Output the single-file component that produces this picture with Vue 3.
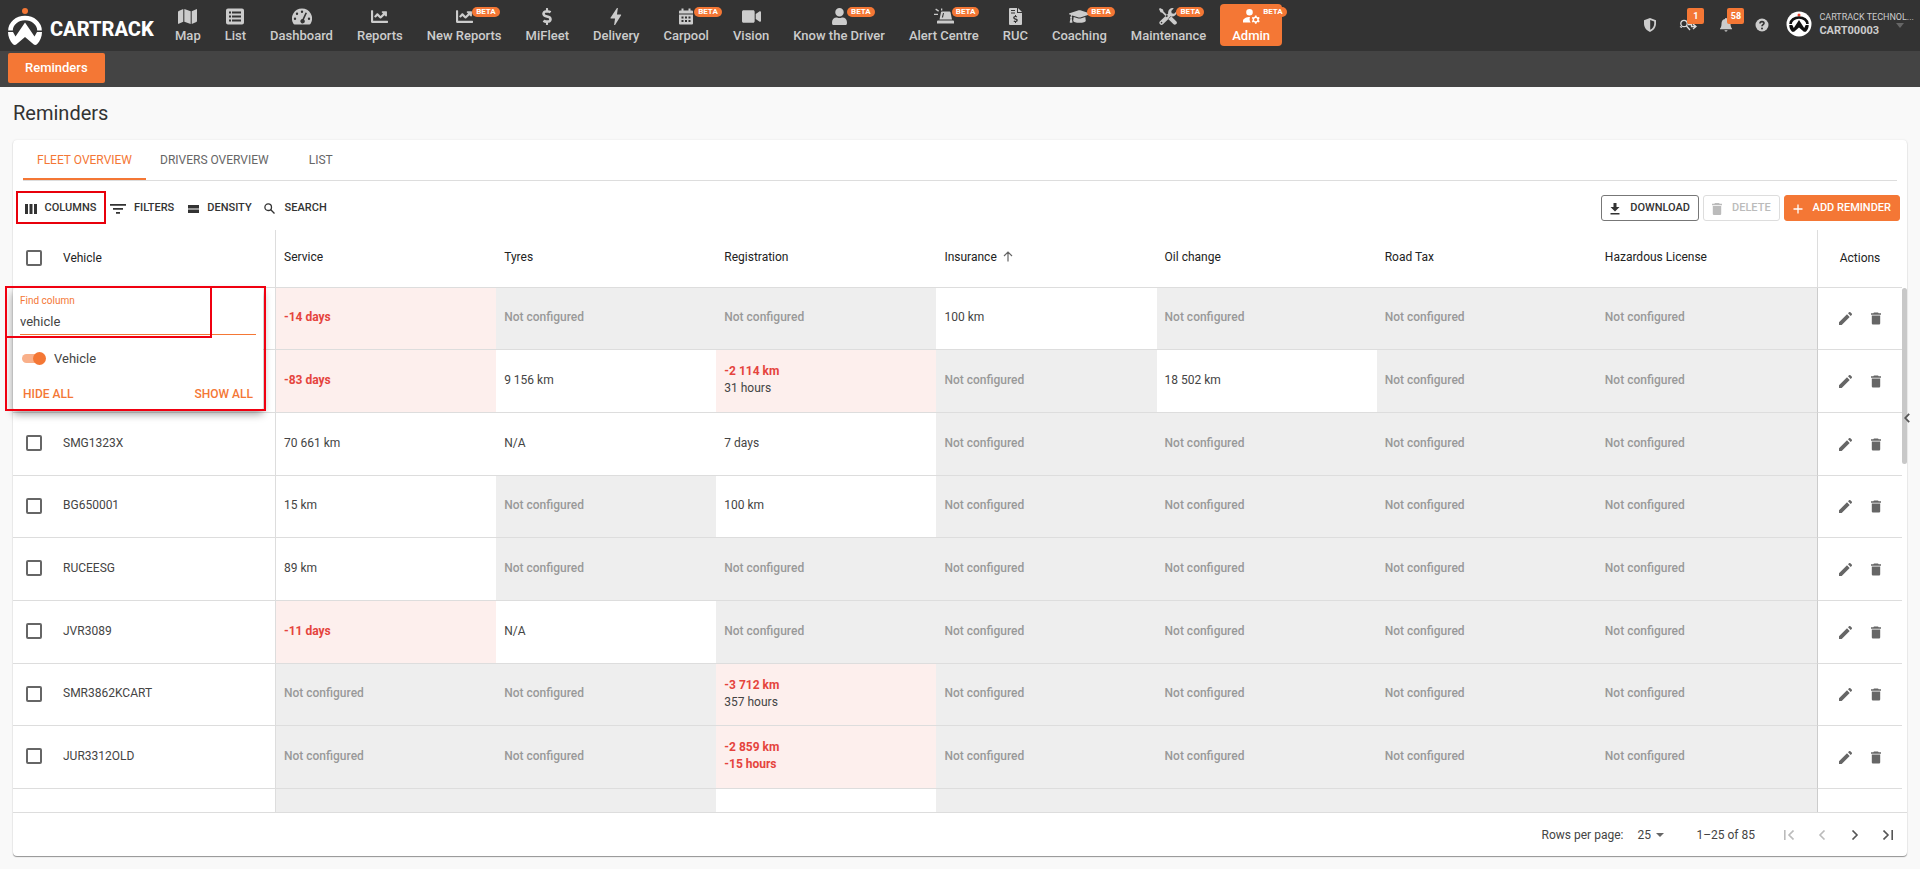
<script setup>
import { ref } from 'vue'

const icons = {
  map: { box: '0 0 576 512', w: 19, d: 'M0 117.66v346.32c0 11.32 11.43 19.06 21.94 14.86L160 416V32L20.12 87.95A32 32 0 0 0 0 117.66zM192 416l192 64V96L192 32v384zM554.06 33.16L416 96v384l139.88-55.95A32 32 0 0 0 576 394.34V48.02c0-11.32-11.43-19.06-21.94-14.86z' },
  list: { box: '0 0 18 16', w: 18, d: 'M2 0h14a2 2 0 0 1 2 2v12a2 2 0 0 1-2 2H2a2 2 0 0 1-2-2V2a2 2 0 0 1 2-2zM3 3v2h2V3zM6 3v2h9V3zM3 7v2h2V7zM6 7v2h9V7zM3 11v2h2v-2zM6 11v2h9v-2z' },
  gauge: { box: '0 0 20 16', w: 20, d: 'M10 0a10 10 0 0 1 8.700 15c-.3.600-.8 1-1.500 1H2.800c-.7 0-1.200-.4-1.500-1A10 10 0 0 1 10 0zM10 2a1.200 1.200 0 1 0 0 2.400A1.200 1.200 0 0 0 10 2zM5 4a1.200 1.200 0 1 0 0 2.400A1.200 1.200 0 0 0 5 4zM3 9a1.200 1.200 0 1 0 0 2.400A1.200 1.200 0 0 0 3 9zM17 9a1.200 1.200 0 1 0 0 2.400A1.200 1.200 0 0 0 17 9zM13.500 4l-3 6.600a2.200 2.200 0 1 0 1.500.5l3-6.600z' },
  chart: { box: '0 0 512 512', w: 17, d: 'M496 384H64V80c0-8.840-7.160-16-16-16H16C7.160 64 0 71.160 0 80v336c0 17.670 14.330 32 32 32h464c8.840 0 16-7.160 16-16v-32c0-8.840-7.160-16-16-16zM464 96H345.940c-21.380 0-32.090 25.850-16.970 40.970l32.400 32.400L288 242.750l-73.370-73.370c-12.500-12.500-32.760-12.500-45.250 0l-68.690 68.690c-6.250 6.250-6.250 16.380 0 22.630l22.620 22.620c6.250 6.250 16.380 6.250 22.630 0L192 237.250l73.370 73.370c12.500 12.500 32.760 12.500 45.250 0l96-96 32.400 32.400c15.120 15.120 40.970 4.410 40.970-16.970V112c0-8.840-7.160-16-16-16z' },
  dollar: { box: '0 0 288 512', w: 10, d: 'M209.2 233.4l-108-31.6C88.7 198.2 80 186.5 80 173.5c0-16.3 13.2-29.5 29.5-29.5h66.3c12.2 0 24.2 3.7 34.2 10.5 6.1 4.1 14.3 3.1 19.5-2l34.8-34c7.1-6.9 6.1-18.4-1.8-24.5C238 74.8 207.4 64.1 176 64V16c0-8.8-7.2-16-16-16h-32c-8.800 0-16 7.200-16 16v48h-2.500C45.800 64-5.400 118.700.5 183.600c4.200 46.100 39.400 83.600 83.800 96.600l102.500 30c12.500 3.700 21.200 15.300 21.200 28.300 0 16.300-13.200 29.500-29.500 29.500h-66.300C100 368 88 364.300 78 357.500c-6.100-4.100-14.300-3.100-19.500 2l-34.800 34c-7.100 6.900-6.100 18.400 1.800 24.500 24.500 19.200 55.100 29.900 86.500 30v48c0 8.800 7.200 16 16 16h32c8.800 0 16-7.200 16-16v-48.200c46.600-.9 90.300-28.600 105.700-72.700 21.500-61.600-14.600-124.800-72.500-141.700z' },
  bolt: { box: '6 3 12 18', w: 12, d: 'M11 21h-1l1-7H6.500c-.5 0-.5-.3-.3-.7L13 3h1l-1 7h4c.5 0 .6.300.4.600L11 21z' },
  calendar: { box: '0 0 14 16', w: 14, d: 'M2.500 0h2v2h5V0h2v2H13a1 1 0 0 1 1 1v2H0V3a1 1 0 0 1 1-1h1.500zM0 6h14v9a1 1 0 0 1-1 1H1a1 1 0 0 1-1-1zM2.500 8v2h2V8zM6 8v2h2V8zM9.500 8v2h2V8zM2.500 11.500v2h2v-2zM6 11.500v2h2v-2zM9.500 11.500v2h2v-2z' },
  video: { box: '0 0 576 512', w: 19, d: 'M336.200 64H47.800C21.400 64 0 85.400 0 111.800v288.400C0 426.600 21.400 448 47.800 448h288.400c26.400 0 47.800-21.400 47.800-47.800V111.800c0-26.400-21.400-47.800-47.800-47.800zm189.400 37.700L416 177.300v157.400l109.600 75.500c21.200 14.600 50.400-.3 50.400-25.800V127.500c0-25.400-29.100-40.400-50.400-25.800z' },
  user: { box: '0 0 448 512', w: 15, d: 'M224 256c70.700 0 128-57.300 128-128S294.700 0 224 0 96 57.300 96 128s57.300 128 128 128zm89.600 32h-16.700c-22.200 10.200-46.900 16-72.900 16s-50.600-5.800-72.900-16h-16.700C60.200 288 0 348.200 0 422.400V464c0 26.500 21.500 48 48 48h352c26.500 0 48-21.500 48-48v-41.600c0-74.200-60.200-134.400-134.400-134.400z' },
  alert: { box: '0 0 20 16', w: 20, d: 'M8 3h7.500a1 1 0 0 1 1 .8L18 11H5.500L7 3.800A1 1 0 0 1 8 3zM9 4.500L7.800 9H9l1-4.500zM4 12h15a1 1 0 0 1 1 1v2H3v-2a1 1 0 0 1 1-1zM2 0l3 2-.7 1.200-3-2zM0 5.200h4v1.400H0zM7 0h1.300v2H7z' },
  file: { box: '0 0 13 17', w: 13, d: 'M1 0h7v5h5v11a1 1 0 0 1-1 1H1a1 1 0 0 1-1-1V1a1 1 0 0 1 1-1zM9 0l4 4H9zM2 2v1h4V2zM2 4.500v1h4v-1zM6 7v1c-2 .2-2.500 2.500-.8 3.200l1.700.7c.7.4.4 1.100-.3 1.100-.6 0-1-.2-1.500-.5l-.6 1c.5.4 1 .5 1.500.6V15h1v-.9c2-.3 2.400-2.700.6-3.300L6 10.200c-.8-.3-.5-1.200.3-1.200.5 0 .9.100 1.300.4l.6-1c-.4-.3-.8-.4-1.200-.5V7z' },
  cap: { box: '0 0 640 512', w: 21, d: 'M622.340 153.200L343.400 67.500c-15.200-4.670-31.600-4.670-46.790 0L17.660 153.200c-23.540 7.230-23.540 38.360 0 45.590l48.630 14.940c-10.670 13.190-17.230 29.280-17.880 46.900C38.780 266.150 32 276.110 32 288c0 10.780 5.680 19.850 13.860 25.650L20.330 428.530C18.110 438.520 25.710 448 35.940 448h56.110c10.240 0 17.840-9.480 15.620-19.470L82.140 313.650C90.320 307.850 96 298.780 96 288c0-11.570-6.470-21.250-15.660-26.870.76-15.020 8.440-28.300 20.690-36.720L296.600 284.500c9.060 2.780 26.440 6.250 46.790 0l278.950-85.700c23.550-7.240 23.550-38.360 0-45.600zM352.790 315.090c-28.530 8.760-52.840 3.920-65.590 0l-145.020-44.550L128 384c0 35.350 85.960 64 192 64s192-28.650 192-64l-14.180-113.470-145.030 44.560z' },
  tools: { box: '0 0 18 17', w: 18, d: 'M1 0L4 1.500 4.500 3.500 9 8l-1.300 1.300L3.200 4.800 1.500 4.300 0 1zM10.500 9.200l1.400-1.200 5.300 5.200a2 2 0 0 1-2.900 2.900L9.200 11zM17.600 3.200A4.500 4.500 0 0 1 12 8.400l-8 7.800a2 2 0 0 1-3-2.900l8.200-7.700A4.600 4.600 0 0 1 14.800.2l-2.500 2.700.4 2.400 2.400.4zM2.500 13.800a.8.8 0 1 0 .1 1.600.8.8 0 0 0-.1-1.600z' },
  admin: { box: '0 0 17 15', w: 17, d: 'M6.500 0a3.300 3.300 0 1 1 0 6.600 3.300 3.300 0 0 1 0-6.600zM7 8c-.7 2-.5 4 .7 5.500H0V12c0-2.500 3.500-4 7-4zM12 6.500h1.500l.3 1.300.9.500 1.300-.4.700 1.300-.9.900v1.100l.9.900-.7 1.300-1.300-.4-.9.500-.3 1.300H12l-.3-1.300-.9-.5-1.300.4-.7-1.300.9-.9v-1.100l-.9-.9.700-1.300 1.300.4.900-.5zM12.700 9a1.600 1.600 0 1 0 0 3.300 1.600 1.600 0 0 0 0-3.300z' },
}

const nav = [
  { label: 'Map', icon: 'map' },
  { label: 'List', icon: 'list' },
  { label: 'Dashboard', icon: 'gauge' },
  { label: 'Reports', icon: 'chart' },
  { label: 'New Reports', icon: 'chart', beta: true },
  { label: 'MiFleet', icon: 'dollar' },
  { label: 'Delivery', icon: 'bolt' },
  { label: 'Carpool', icon: 'calendar', beta: true },
  { label: 'Vision', icon: 'video' },
  { label: 'Know the Driver', icon: 'user', beta: true },
  { label: 'Alert Centre', icon: 'alert', beta: true },
  { label: 'RUC', icon: 'file' },
  { label: 'Coaching', icon: 'cap', beta: true },
  { label: 'Maintenance', icon: 'tools', beta: true },
  { label: 'Admin', icon: 'admin', beta: true, active: true },
]

const columns = ['Service', 'Tyres', 'Registration', 'Insurance', 'Oil change', 'Road Tax', 'Hazardous License']

// '' is an unconfigured reminder, a leading minus marks an overdue one
const rows = [
  { name: '', cells: ['-14 days', '', '', '100 km', '', '', ''] },
  { name: '', cells: ['-83 days', '9 156 km', '-2 114 km|31 hours', '', '18 502 km', '', ''] },
  { name: 'SMG1323X', cells: ['70 661 km', 'N/A', '7 days', '', '', '', ''] },
  { name: 'BG650001', cells: ['15 km', '', '100 km', '', '', '', ''] },
  { name: 'RUCEESG', cells: ['89 km', '', '', '', '', '', ''] },
  { name: 'JVR3089', cells: ['-11 days', 'N/A', '', '', '', '', ''] },
  { name: 'SMR3862KCART', cells: ['', '', '-3 712 km|357 hours', '', '', '', ''] },
  { name: 'JUR3312OLD', cells: ['', '', '-2 859 km|-15 hours', '', '', '', ''] },
  { name: '', cells: [' ', ' ', '|', ' ', ' ', ' ', ' '] },
]

function cellClass(value) {
  if (value.startsWith('-')) return 'overdue'
  return value.trim() === '' ? 'empty' : ''
}
function lines(value) {
  return value === '' ? ['Not configured'] : value.split('|')
}

const search = ref('vehicle')
const showVehicle = ref(true)
</script>

<template>
  <div class="page">
    <header class="topbar">
      <a class="brand" href="#" aria-label="Cartrack home">
        <svg class="emblem" viewBox="0 0 36 40" aria-hidden="true">
          <circle cx="18" cy="5" r="3" fill="#f47735" />
          <path d="M3.500 24.500a14.500 12.500 0 0 1 29 0" fill="none" stroke="#fff" stroke-width="4.600" />
          <path d="M1 26h5l2.500 4.500L18 16.500l9.500 14L30 26h5c0 5-2 9-5 12.300-1 .8-2.500.8-3.500 0L18 31l-8.500 7.300c-1 .8-2.500.8-3.500 0C3 35 1 31 1 26z" fill="#fff" />
        </svg>
        <span>CARTRACK</span>
      </a>
      <nav class="menu">
        <a v-for="item in nav" :key="item.label" href="#" class="item" :class="{ active: item.active }">
          <span class="glyph">
            <svg :viewBox="icons[item.icon].box" :width="icons[item.icon].w" height="17" aria-hidden="true">
              <path :d="icons[item.icon].d" fill="currentColor" fill-rule="evenodd" />
            </svg>
            <span v-if="item.beta" class="beta">BETA</span>
          </span>
          <span>{{ item.label }}</span>
        </a>
      </nav>
      <div class="tools">
        <button type="button" aria-label="Privacy">
          <svg viewBox="0 0 14 14" width="14" height="14"><path fill="#ccc" fill-rule="evenodd" d="M7 0l6 2.200v3.300c0 4-2.500 7-6 8.500-3.500-1.500-6-4.500-6-8.500V2.200zM7.200 2v9.800c2.500-1.300 4-3.500 4-6.300V3.500z" /></svg>
        </button>
        <button type="button" aria-label="Lookups">
          <svg viewBox="0 0 18 14" width="18" height="14" fill="none" stroke="#ddd"><circle cx="5" cy="5.500" r="3.200" stroke-width="1.300" /><path d="M7.500 8l3.500 4M1 8.500l2 1M8 3h5M9 6.500h3.500v2h4M14 6l3 2.500-3 2.500" stroke-width="1.300" /></svg>
          <span class="count">1</span>
        </button>
        <button type="button" aria-label="Notifications">
          <svg viewBox="0 0 14 14" width="14" height="14"><path fill="#ccc" d="M7 0c.6 0 1 .4 1 1 2.400.5 3.500 2.300 3.500 4.500 0 2.500.5 4 1.500 5v.7H1v-.7c1-1 1.500-2.500 1.500-5C2.500 3.300 3.600 1.500 6 1c0-.6.4-1 1-1zM5.500 12.200h3C8.500 14 5.500 14 5.500 12.200z" /></svg>
          <span class="count">58</span>
        </button>
        <button type="button" aria-label="Help">
          <svg viewBox="0 0 14 14" width="14" height="14"><circle cx="7" cy="7" r="6.500" fill="#ccc" /><path d="M5 5.500C5 3 9 3 9 5.300 9 6.700 7 6.700 7 8.300" fill="none" stroke="#333" stroke-width="1.600" /><circle cx="7" cy="10.500" r="1" fill="#333" /></svg>
        </button>
      </div>
      <button class="account" type="button">
        <svg viewBox="0 0 26 26" width="26" height="26" aria-hidden="true">
          <circle cx="13" cy="13" r="12.500" fill="#fff" /><circle cx="13" cy="4" r="1.500" fill="#f4442e" />
          <path d="M4.500 13a8.500 6.500 0 0 1 17 0" fill="none" stroke="#111" stroke-width="2.600" />
          <path d="M3.300 14h3l1.500 3L13 9l5.200 8 1.500-3h3c0 3-1 5-2.800 6.700h-2L13 16.500l-4.900 4.200h-2C4.300 19 3.300 17 3.300 14z" fill="#111" />
        </svg>
        <span class="who"><span>CARTRACK TECHNOL...</span><strong>CART00003</strong></span>
        <svg class="down" viewBox="0 0 8 5" width="8" height="5" aria-hidden="true"><path d="M0 0h8L4 5z" fill="#666" /></svg>
      </button>
    </header>
    <div class="subbar"><a href="#" class="chip">Reminders</a></div>

    <main class="content">
      <h1>Reminders</h1>
      <section class="card">
        <div class="tabs" role="tablist">
          <button type="button" role="tab" aria-selected="true" class="on">FLEET OVERVIEW</button>
          <button type="button" role="tab" aria-selected="false">DRIVERS OVERVIEW</button>
          <button type="button" role="tab" aria-selected="false">LIST</button>
        </div>
        <div class="toolbar">
          <button type="button" class="marked">
            <svg viewBox="0 0 12 10" width="12" height="10"><path d="M0 0h3v10H0zM4.500 0h3v10h-3zM9 0h3v10H9z" fill="currentColor" /></svg>COLUMNS
          </button>
          <button type="button" class="filters">
            <svg viewBox="0 0 16 10" width="16" height="10"><path d="M0 0h16v1.700H0zM3 4h10v1.700H3zM6 8h4v1.700H6z" fill="currentColor" /></svg>FILTERS
          </button>
          <button type="button" class="density">
            <svg viewBox="0 0 11 8" width="11" height="8"><path d="M0 0h11v3.500H0zM0 4.500h11V8H0z" fill="currentColor" /></svg>DENSITY
          </button>
          <button type="button" class="find">
            <svg viewBox="0 0 11 11" width="11" height="11" fill="none" stroke="currentColor" stroke-width="1.300"><circle cx="4.200" cy="4.200" r="3.300" /><path d="M6.800 6.800l3.700 3.700" /></svg>SEARCH
          </button>
          <div class="actions">
            <button type="button" class="box">
              <svg viewBox="0 0 10 12" width="10" height="12"><path d="M3.500 0h3v4H9.500L5 8.500.500 4h3zM.500 10h9v1.500h-9z" fill="currentColor" /></svg>DOWNLOAD
            </button>
            <button type="button" class="box" disabled>
              <svg viewBox="0 0 10 12" width="10" height="12"><path d="M3 0h4l.7.700H10v1.500H0V.7h2.300zM.8 3h8.400v7.700A1.200 1.200 0 0 1 8 12H2a1.200 1.200 0 0 1-1.200-1.300z" fill="currentColor" /></svg>DELETE
            </button>
            <button type="button" class="box primary">
              <svg viewBox="0 0 10 10" width="10" height="10"><path d="M5 .5v9M.5 5h9" stroke="currentColor" stroke-width="1.300" /></svg>ADD REMINDER
            </button>
          </div>
        </div>

        <div class="grid">
          <div class="scroller">
            <table>
              <colgroup>
                <col class="c-check" /><col class="c-name" />
                <col v-for="c in columns" :key="c" />
                <col class="c-act" />
              </colgroup>
              <thead>
                <tr>
                  <th class="check"><input type="checkbox" aria-label="Select all" /></th>
                  <th class="name">Vehicle</th>
                  <th v-for="c in columns" :key="c">
                    {{ c }}
                    <svg v-if="c === 'Insurance'" viewBox="0 0 10 11" width="10" height="11" fill="none" stroke="#666" stroke-width="1.200"><path d="M5 10.500V1M1 5l4-4 4 4" /></svg>
                  </th>
                  <th class="act">Actions</th>
                </tr>
              </thead>
              <tbody>
                <tr v-for="(row, i) in rows" :key="i">
                  <td class="check"><input v-if="i < 8" type="checkbox" :aria-label="'Select row ' + (i + 1)" /></td>
                  <td class="name">{{ row.name }}</td>
                  <td v-for="(cell, j) in row.cells" :key="j" :class="cellClass(cell)">
                    <div v-for="(line, k) in lines(cell)" :key="k" :class="{ late: line.startsWith('-') }">{{ line }}</div>
                  </td>
                  <td class="act">
                    <div v-if="i < 8" class="pair">
                      <button type="button" aria-label="Edit">
                        <svg viewBox="0 0 13 13" width="13" height="13"><path d="M0 10.300L8 2.300 10.700 5l-8 8H0zM9 1.300L10 .3a1 1 0 0 1 1.400 0l1.300 1.300a1 1 0 0 1 0 1.400l-1 1z" fill="currentColor" /></svg>
                      </button>
                      <button type="button" aria-label="Delete">
                        <svg viewBox="0 0 10 12" width="10" height="13"><path d="M3 0h4l.7.700H10v1.500H0V.7h2.300zM.8 3h8.400v7.700A1.200 1.200 0 0 1 8 12H2a1.200 1.200 0 0 1-1.200-1.300z" fill="currentColor" /></svg>
                      </button>
                    </div>
                  </td>
                </tr>
              </tbody>
            </table>
          </div>
          <div class="thumb"></div>
          <button class="drawer" type="button" aria-label="Open panel">
            <svg viewBox="0 0 6 10" width="6" height="10" fill="none" stroke="#555" stroke-width="1.800"><path d="M5.200 .8L1.200 5l4 4.200" /></svg>
          </button>

          <div class="popup">
            <label class="field">
              <span>Find column</span>
              <input v-model="search" type="text" />
            </label>
            <label class="toggle">
              <input v-model="showVehicle" type="checkbox" role="switch" />
              <span>Vehicle</span>
            </label>
            <div class="ends">
              <button type="button">HIDE ALL</button>
              <button type="button">SHOW ALL</button>
            </div>
            <div class="mark outer"></div>
            <div class="mark inner"></div>
          </div>
        </div>

        <footer class="pager">
          <label for="per-page">Rows per page:</label>
          <span class="pick">
            <select id="per-page"><option>25</option><option>50</option></select>
            <svg viewBox="0 0 8 4" width="8" height="4" aria-hidden="true"><path d="M0 0h8L4 4z" fill="#666" /></svg>
          </span>
          <span class="range">1–25 of 85</span>
          <div class="steps">
            <button type="button" disabled aria-label="First page"><svg viewBox="0 0 10 10" width="10" height="10"><path d="M.8 0v10M9.500.5L5 5l4.500 4.500" /></svg></button>
            <button type="button" disabled aria-label="Previous page"><svg viewBox="0 0 10 10" width="10" height="10"><path d="M7.500.5L3 5l4.500 4.500" /></svg></button>
            <button type="button" aria-label="Next page"><svg viewBox="0 0 10 10" width="10" height="10"><path d="M2.500.5L7 5 2.500 9.500" /></svg></button>
            <button type="button" aria-label="Last page"><svg viewBox="0 0 10 10" width="10" height="10"><path d="M9.200 0v10M.5.5L5 5 .5 9.500" /></svg></button>
          </div>
        </footer>
      </section>
    </main>
  </div>
</template>

<style>
body { background: #f9f9f9; }
</style>

<style scoped>
.page, .page * { box-sizing: border-box; }
.page {
  height: 100vh;
  display: flex;
  flex-direction: column;
  font-family: Roboto, "Liberation Sans", sans-serif;
  font-size: 12px;
  color: #444;
}
button {
  font: inherit;
  color: inherit;
  background: none;
  border: 0;
  padding: 0;
  display: inline-flex;
  align-items: center;
  justify-content: center;
  white-space: nowrap;
}
a { text-decoration: none; }
svg { flex: none; }

.topbar {
  flex: none;
  height: 51px;
  display: flex;
  background: #333;
  color: #ccc;
}
.brand {
  display: flex;
  align-items: center;
  width: 163px;
  padding-left: 7px;
  gap: 7px;
  color: #fff;
  font-size: 20px;
  line-height: 24px;
  font-weight: 800;
}
.brand span { margin-top: 6px; }
.emblem { width: 36px; height: 40px; }
.menu { display: flex; align-items: flex-start; padding-top: 4px; }
.item {
  display: flex;
  flex-direction: column;
  align-items: center;
  height: 42px;
  padding: 3px 12px 0;
  color: #ccc;
  font-size: 13px;
  font-weight: 500;
  line-height: 18px;
  gap: 2px;
  white-space: nowrap;
}
.item.active { background: #f47735; color: #fff; border-radius: 4px; margin-left: 2px; }
.glyph { position: relative; display: flex; height: 18px; align-items: center; }
.beta {
  position: absolute;
  left: calc(50% + 8px);
  top: 0;
  padding: 0 4px;
  border-radius: 5px;
  background: #f47735;
  color: #fff;
  font-size: 8px;
  font-weight: 700;
  line-height: 10px;
}
.tools {
  display: flex;
  align-items: flex-start;
  gap: 22px;
  margin-left: auto;
  padding: 18px 17px 0 0;
}
.tools button { position: relative; }
.count {
  position: absolute;
  left: 8px;
  top: -10px;
  min-width: 17px;
  padding: 0 3px;
  border-radius: 2px;
  background: #f47735;
  color: #fff;
  font-size: 9px;
  font-weight: 700;
  line-height: 16px;
}
.account { align-items: flex-start; padding: 11px 6px 0 0; position: relative; gap: 7px; }
.who { display: flex; flex-direction: column; align-items: flex-start; font-size: 9px; line-height: 13px; }
.who strong { font-size: 11px; }
.down { position: absolute; right: 16px; top: 23px; }
.subbar { flex: none; height: 36px; padding: 2px 8px; background: #444; }
.chip {
  display: inline-block;
  padding: 0 17px;
  border-radius: 2px;
  background: #f47735;
  color: #fff;
  font-size: 13px;
  font-weight: 500;
  line-height: 30px;
}

.content {
  flex: 1;
  min-height: 0;
  display: flex;
  flex-direction: column;
  padding: 0 13px 13px;
}
h1 { margin: 0; padding: 14px 0; font-size: 20px; font-weight: 400; line-height: 25px; color: #333; }
.card {
  flex: 1;
  min-height: 0;
  display: flex;
  flex-direction: column;
  background: #fff;
  border-radius: 4px;
  box-shadow: 0 1px 1px rgba(0, 0, 0, .4), 0 0 2px rgba(0, 0, 0, .1);
}
.tabs { display: flex; margin: 0 10px; height: 41px; border-bottom: 1px solid #ddd; }
.tabs button { padding: 0 14px; font-size: 12px; color: #666; height: 40px; min-width: 76px; }
.tabs .on { color: #f47735; border-bottom: 2px solid #f47735; padding-top: 2px; }

.toolbar { display: flex; align-items: center; height: 49px; padding: 4px 7px 0 3px; font-size: 11px; font-weight: 500; color: #333; }
.toolbar svg { margin-top: 2px; }
.toolbar > button { gap: 9px; }
.toolbar > .marked { height: 33px; width: 90px; border: 2px solid #e8000b; gap: 8px; padding-right: 1px; }
.toolbar > .filters { margin-left: 4px; gap: 8px; }
.toolbar > .density { margin-left: 14px; gap: 8px; }
.toolbar > .find { margin-left: 12px; gap: 10px; }
.actions { display: flex; gap: 4px; margin-left: auto; }
.box { height: 26px; padding: 0 8px; gap: 10px; border: 1px solid #777; border-radius: 3px; }
.box:disabled { color: #bbb; border-color: #ddd; }
.primary { background: #f47735; border-color: #f47735; color: #fff; }

.grid { position: relative; flex: 1; min-height: 0; display: flex; }
.scroller { flex: 1; min-width: 0; overflow: hidden; padding-right: 5px; }
table { width: 100%; table-layout: fixed; border-collapse: separate; border-spacing: 0; }
.c-check { width: 42px; }
.c-name { width: 221px; }
.c-act { width: 85px; }
th, td { padding: 0 0 0 8px; text-align: left; border-bottom: 1px solid #ddd; line-height: 17px; vertical-align: middle; }
th { height: 58px; font-weight: 400; font-size: 12px; padding-bottom: 3px; color: #222; }
th svg { vertical-align: -1px; margin-left: 3px; }
td { height: 63px; padding-bottom: 2px; }
tr:nth-child(3n + 1) td { height: 62px; }
.check { padding: 0 0 2px 13px; }
th.name { padding-bottom: 0; }
.name { border-right: 1px solid #ddd; }
td.empty { background: #eee; color: #999; font-weight: 500; }
td.overdue { background: #fdefed; }
.late { color: #e5443d; font-weight: 700; }
.act { border-left: 1px solid #ccc; background: #fff; }
th.act { padding: 0; text-align: center; border-left-color: #ddd; }
td.act { padding: 0; }
.pair { display: flex; justify-content: center; gap: 19px; color: #666; }
input[type="checkbox"] { appearance: none; margin: 0; display: block; width: 16px; height: 16px; border: 2px solid #666; border-radius: 2px; }
.thumb { position: absolute; right: 0; top: 58px; width: 5px; height: 176px; border-radius: 3px; background: #c8c8c8; }
.drawer { position: absolute; right: -3px; top: 183px; }

.popup {
  position: absolute;
  left: 0;
  top: 58px;
  width: 250px;
  height: 122px;
  padding: 7px 7px 0;
  background: #fff;
  border-radius: 3px;
  box-shadow: 0 4px 8px rgba(0, 0, 0, .4);
  font-size: 13px;
}
.field { display: block; border-bottom: 1px solid #f47735; height: 40px; }
.field span { display: block; font-size: 10px; line-height: 12px; color: #f47735; }
.field input { display: block; width: 100%; margin-top: 5px; padding: 0; border: 0; outline: 0; background: none; font: inherit; line-height: 20px; color: #444; }
.toggle { display: flex; align-items: center; gap: 10px; height: 47px; padding-left: 2px; color: #444; }
.toggle input[type="checkbox"] { width: 22px; height: 9px; border: 0; border-radius: 5px; background: #f9b08a; position: relative; }
.toggle input::after { content: ""; position: absolute; right: -2px; top: -2px; width: 13px; height: 13px; border-radius: 50%; background: #f47735; }
.ends { display: flex; justify-content: space-between; padding: 3px 3px 0; color: #f47735; font-size: 12px; font-weight: 500; line-height: 18px; }
.mark { position: absolute; border: 2px solid #f00010; pointer-events: none; }
.outer { left: -8px; top: -2px; right: -3px; bottom: -1px; }
.inner { left: -8px; top: -2px; width: 207px; height: 52px; }

.pager { flex: none; height: 44px; display: flex; align-items: center; justify-content: flex-end; border-top: 1px solid #ddd; padding-right: 14px; }
.pick { display: flex; align-items: center; margin-left: 14px; gap: 5px; }
select { appearance: none; border: 0; padding: 0; background: none; font: inherit; color: inherit; }
.range { margin: 0 29px 0 32px; }
.steps { display: flex; gap: 23px; }
.steps path { fill: none; stroke: #555; stroke-width: 1.6; }
.steps :disabled path { stroke: #bbb; }
</style>
